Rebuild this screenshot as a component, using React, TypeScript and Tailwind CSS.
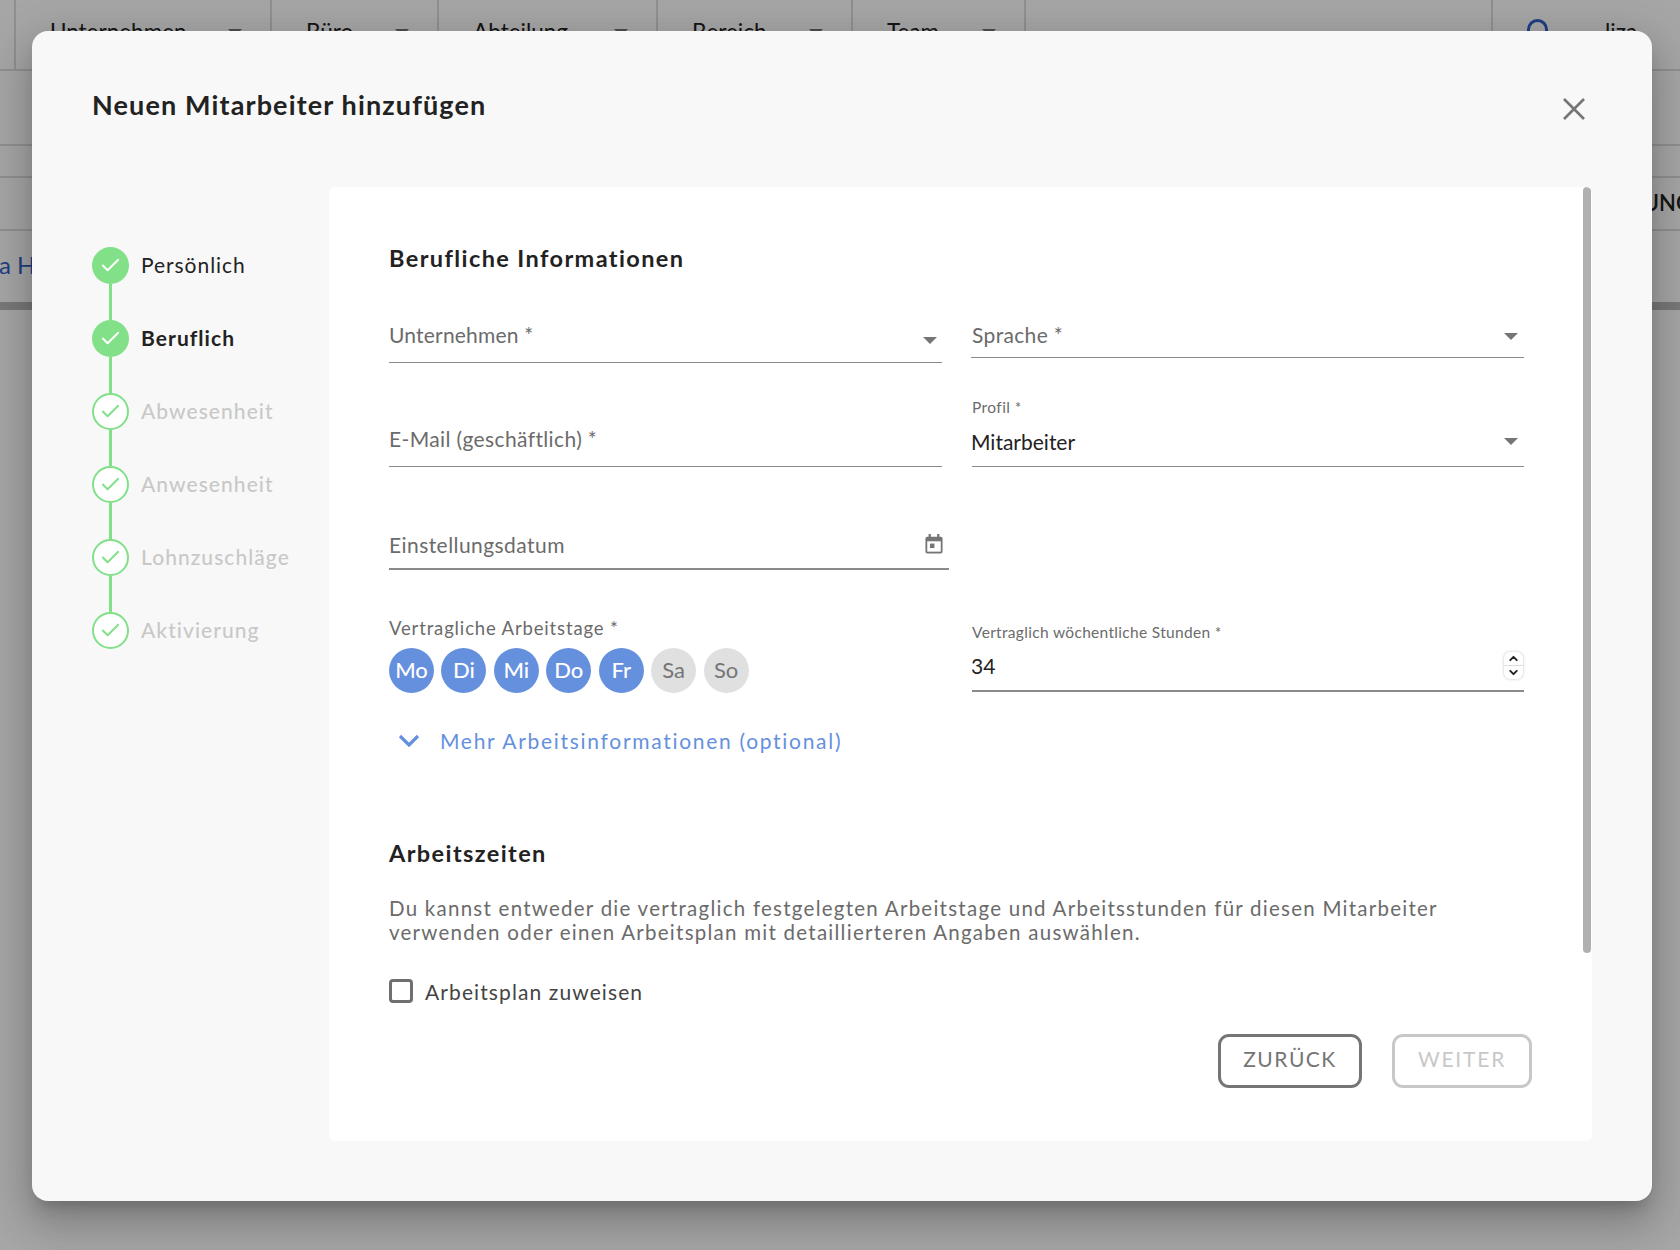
import { Check, ChevronDown, ChevronUp } from 'lucide-react';

const filters = [
  { label: 'Unternehmen', width: 'w-[256px]' },
  { label: 'Büro', width: 'w-[167px]' },
  { label: 'Abteilung', width: 'w-[219px]' },
  { label: 'Bereich', width: 'w-[195px]' },
  { label: 'Team', width: 'w-[173px]' },
];

const steps = [
  { label: 'Persönlich', state: 'done' },
  { label: 'Beruflich', state: 'active' },
  { label: 'Abwesenheit', state: 'open' },
  { label: 'Anwesenheit', state: 'open' },
  { label: 'Lohnzuschläge', state: 'open' },
  { label: 'Aktivierung', state: 'open' },
];

const days = [
  { label: 'Mo', on: true },
  { label: 'Di', on: true },
  { label: 'Mi', on: true },
  { label: 'Do', on: true },
  { label: 'Fr', on: true },
  { label: 'Sa', on: false },
  { label: 'So', on: false },
];

function Arrow({ className = '' }: { className?: string }) {
  return <span className={`block h-0 w-0 border-x-[7px] border-t-[7px] border-x-transparent border-t-[#757575] ${className}`} />;
}

function Background() {
  return (
    <div className="h-full bg-white text-[22.500px] text-[#222]">
      <div className="flex h-[71px] border-b-2 border-[#ddd]">
        <div className="w-[16px] border-r-2 border-[#ddd]" />
        {filters.map((f) => (
          <div key={f.label} className={`${f.width} flex items-start justify-between border-r-2 border-[#ddd] pl-[34px] pr-[28px] pt-[15px]`}>
            {f.label}
            <Arrow className="mt-[14px]" />
          </div>
        ))}
        <div className="w-[467px] border-r-2 border-[#ddd]" />
        <div className="flex pl-[34px] pt-[19px]">
          <span className="h-[24px] w-[21px] rounded-full border-[3px] border-[#2f62c9]" />
          <span className="ml-[57px] -mt-[4px]">liza</span>
        </div>
      </div>
      <div className="h-[75px] border-b-2 border-[#ddd]" />
      <div className="h-[32px] border-b-2 border-[#ddd]" />
      <div className="flex h-[53px] items-center justify-end overflow-hidden border-b-2 border-[#ddd] pb-[2px] text-[22px] font-semibold">
        <span className="-mr-[12px]">UNG</span>
      </div>
      <div className="flex h-[71px] items-center overflow-hidden pb-[4px] text-[24px] text-[#2f62c9]">
        <span className="-ml-[1px]">a H</span>
      </div>
      <div className="h-[8px] bg-[#bbb]" />
    </div>
  );
}

function Stepper() {
  return (
    <div className="w-[237px] shrink-0 pt-[60px]">
      {steps.map((step, i) => (
        <div key={step.label}>
          <div className="flex h-[37px] items-center gap-[12px]">
            <div
              className={
                step.state === 'open'
                  ? 'flex h-[37px] w-[37px] items-center justify-center rounded-full border-2 border-[#82e088] bg-white text-[#82e088]'
                  : 'flex h-[37px] w-[37px] items-center justify-center rounded-full bg-[#82e088] text-white'
              }
            >
              <Check size={23} strokeWidth={2} />
            </div>
            <span
              className={
                step.state === 'open'
                  ? 'pb-[2px] text-[21px] font-medium tracking-[1.050px] text-[#c8c8c8]'
                  : step.state === 'active'
                    ? 'pb-[2px] text-[21px] font-bold tracking-[1.050px] text-[#222]'
                    : 'pb-[2px] text-[21px] tracking-[0.950px] text-[#222]'
              }
            >
              {step.label}
            </span>
          </div>
          {i < steps.length - 1 && <div className="ml-[17px] h-[36px] w-[3px] bg-[#82e088]" />}
        </div>
      ))}
    </div>
  );
}

function DayPicker() {
  return (
    <div className="mt-[7px] flex gap-[7.450px]">
      {days.map((d) => (
        <div
          key={d.label}
          className={
            d.on
              ? 'flex h-[45px] w-[45px] items-center justify-center rounded-full bg-[#6590dd] pb-[3px] text-[22px] font-medium text-white'
              : 'flex h-[45px] w-[45px] items-center justify-center rounded-full bg-[#e0e0e0] pb-[3px] text-[22px] text-[#757575]'
          }
        >
          {d.label}
        </div>
      ))}
    </div>
  );
}

function CalendarIcon() {
  return (
    <svg width="18" height="20" viewBox="0 0 20 22" fill="none" className="mb-[6px] mr-[6px]">
      <path d="M4 0h2.500v3h7V0H16v3h1.500A2 2 0 0 1 19.500 5v14.500a2 2 0 0 1-2 2h-15a2 2 0 0 1-2-2V5a2 2 0 0 1 2-2H4z" fill="#757575" />
      <rect x="2.500" y="8" width="15" height="11.500" fill="#fff" />
      <rect x="5.500" y="10.500" width="5" height="5" fill="#757575" />
    </svg>
  );
}

function NumberSpinner() {
  return (
    <div className="mb-[11px] flex h-[27px] w-[19px] flex-col items-center justify-center rounded-[6px] bg-white text-[#222] shadow-[0_0_3px_rgba(0,0,0,0.25)]">
      <ChevronUp size={13} strokeWidth={3.500} />
      <div className="h-px w-full bg-[#ddd]" />
      <ChevronDown size={13} strokeWidth={3.500} />
    </div>
  );
}

function WorkForm() {
  return (
    <div className="flex gap-[30px]">
      <div className="w-[553px]">
        <div className="flex h-[63px] items-end justify-between border-b border-[#8a8a8a] pb-[12px] pr-[5px] text-[21px] tracking-[0.200px] text-[#6b6b6b]">
          Unternehmen *
          <Arrow className="mb-[6px]" />
        </div>
        <div className="flex h-[104px] items-end border-b border-[#8a8a8a] pb-[12px] text-[21px] tracking-[0.370px] text-[#6b6b6b]">
          E-Mail (geschäftlich) *
        </div>
        <div className="flex h-[103px] w-[560px] items-end justify-between border-b-2 border-[#8a8a8a] pb-[8px] text-[21px] tracking-[0.440px] text-[#6b6b6b]">
          Einstellungsdatum
          <CalendarIcon />
        </div>
        <div className="mt-[46px] text-[18.500px] leading-[25px] tracking-[0.850px] text-[#6b6b6b]">Vertragliche Arbeitstage *</div>
        <DayPicker />
      </div>
      <div className="w-[552px]">
        <div className="-ml-[1px] flex h-[58px] items-end justify-between border-b border-[#8a8a8a] pb-[7px] pl-[1px] pr-[6px] text-[21px] tracking-[0.350px] text-[#6b6b6b]">
          Sprache *
          <Arrow className="mb-[10px]" />
        </div>
        <div className="flex h-[109px] flex-col justify-end border-b border-[#8a8a8a] pb-[9px] pr-[6px]">
          <div className="mb-[6px] text-[15.500px] tracking-[0.400px] text-[#6b6b6b]">Profil *</div>
          <div className="flex items-center justify-between text-[21px] text-[#222]">
            <span className="-ml-px">Mitarbeiter</span>
            <Arrow />
          </div>
        </div>
        <div className="mt-[154px] text-[15.500px] tracking-[0.320px] text-[#6b6b6b]">Vertraglich wöchentliche Stunden *</div>
        <div className="flex h-[48px] items-end justify-between border-b-2 border-[#8a8a8a] pr-[1px] text-[21px] text-[#222]">
          <span className="-ml-px pb-[9px]">34</span>
          <NumberSpinner />
        </div>
      </div>
    </div>
  );
}

function Panel() {
  return (
    <div className="relative h-[954px] w-[1263px] overflow-hidden rounded-[6px] bg-white pl-[60px] pt-[56px]">
      <div className="absolute right-[1px] top-0 h-[766px] w-[8px] rounded-full bg-[#b0b0b0]" />
      <h2 className="h-[30px] text-[23.500px] font-bold leading-[30px] tracking-[1.400px] text-[#222]">Berufliche Informationen</h2>
      <div className="mt-[27px]">
        <WorkForm />
      </div>
      <div className="ml-[9px] mt-[32px] flex items-center gap-[20px] text-[21px] tracking-[1.700px] text-[#6590dd]">
        <svg width="22" height="13" viewBox="0 0 22 13" fill="none">
          <path d="M2 2l9 9 9-9" stroke="#6590dd" strokeWidth="3.200" />
        </svg>
        Mehr Arbeitsinformationen (optional)
      </div>
      <h2 className="mt-[81px] h-[30px] text-[23.500px] font-bold leading-[30px] tracking-[1.400px] text-[#222]">Arbeitszeiten</h2>
      <p className="mt-[28px] w-[1100px] text-[20.500px] leading-[24.500px] tracking-[1.250px] text-[#6b6b6b]">
        Du kannst entweder die vertraglich festgelegten Arbeitstage und Arbeitsstunden für diesen Mitarbeiter verwenden oder einen Arbeitsplan mit detaillierteren Angaben auswählen.
      </p>
      <div className="mt-[31px] flex items-center gap-[12px] text-[21px] tracking-[1.100px] text-[#444]">
        <span className="h-[24px] w-[24px] rounded-[4px] border-[3px] border-[#6f6f6f]" />
        Arbeitsplan zuweisen
      </div>
      <div className="mr-[60px] mt-[27px] flex justify-end gap-[30px]">
        <button className="h-[54px] w-[144px] rounded-[11px] border-[3px] border-[#757575] pb-[4px] text-[21px] tracking-[1.500px] text-[#757575]">ZURÜCK</button>
        <button className="h-[54px] w-[140px] rounded-[11px] border-[3px] border-[#c8c8c8] pb-[4px] text-[21px] tracking-[1.800px] text-[#c8c8c8]">WEITER</button>
      </div>
    </div>
  );
}

export default function App() {
  return (
    <div className="relative h-[1250px] w-[1680px] overflow-hidden [font-family:Lato,sans-serif]">
      <Background />
      <div className="absolute inset-0 bg-black/35 pl-[32px] pt-[31px]">
        <div className="h-[1170px] w-[1620px] rounded-[16px] bg-[#f8f8f8] pl-[60px] shadow-[0_11px_15px_-7px_rgba(0,0,0,0.2),0_24px_38px_3px_rgba(0,0,0,0.14),0_9px_46px_8px_rgba(0,0,0,0.12)]">
          <div className="flex h-[156px] items-start justify-between pr-[67px] pt-[56px]">
            <h1 className="text-[27px] font-bold leading-[36px] tracking-[1.130px] text-[#222]">Neuen Mitarbeiter hinzufügen</h1>
            <svg width="22" height="22" viewBox="0 0 22 22" fill="none" className="mt-[11px]">
              <path d="M1 1l20 20M21 1L1 21" stroke="#757575" strokeWidth="2.600" />
            </svg>
          </div>
          <div className="flex">
            <Stepper />
            <Panel />
          </div>
        </div>
      </div>
    </div>
  );
}
